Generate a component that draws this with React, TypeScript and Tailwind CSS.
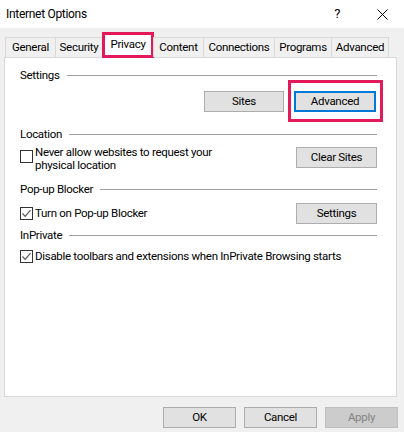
import React from "react";

const font = { fontFamily: 'Roboto, "Noto Sans", sans-serif' };

function Btn({ children, w, disabled, focused }: { children: React.ReactNode; w: string; disabled?: boolean; focused?: boolean }) {
  return (
    <div
      className={
        "h-[21px] flex items-center justify-center text-[11.5px] leading-none whitespace-nowrap " +
        w +
        (disabled
          ? " bg-[#cccccc] border border-[#bfbfbf] text-[#838383]"
          : focused
          ? " bg-[#e1e1e1] border-2 border-[#0078d7] text-[#000]"
          : " bg-[#e1e1e1] border border-[#adadad] text-[#000]")
      }
    >
      {children}
    </div>
  );
}

function Header({ label }: { label: string }) {
  return (
    <div className="flex items-center h-[16px] gap-[7px]">
      <span className="text-[11.5px] leading-[16px] text-black whitespace-nowrap">{label}</span>
      <div className="flex-1 h-px bg-[#a0a0a0]" />
    </div>
  );
}

function Check({ checked }: { checked: boolean }) {
  return (
    <div className="w-[13px] h-[13px] border border-[#333333] bg-white flex items-center justify-center shrink-0">
      {checked && (
        <svg width="11" height="11" viewBox="0 0 11 11">
          <path d="M1.5 5.5 L4.2 8.3 L9.5 2.2" fill="none" stroke="#555555" strokeWidth="1.2" />
        </svg>
      )}
    </div>
  );
}

const tabs = ["General", "Security", "Privacy", "Content", "Connections", "Programs", "Advanced"];
const tabW = ["w-[50px]", "w-[48px]", "w-[50px]", "w-[50px]", "w-[71px]", "w-[57px]", "w-[58px]"];

export default function App() {
  return (
    <div className="w-[404px] h-[432px] bg-[#f0f0f0] flex flex-col overflow-hidden tracking-[-0.3px]" style={font}>
      {/* Title bar */}
      <div className="h-[28px] bg-white flex items-center pl-[6px] shrink-0">
        <span className="text-[12px] text-black">Internet Options</span>
        <span className="ml-auto mr-[37px] text-[13px] text-black">?</span>
        <svg width="11" height="11" viewBox="0 0 11 11" className="mr-[16px]">
          <path d="M0.5 0.5 L10.5 10.5 M10.5 0.5 L0.5 10.5" stroke="#000" strokeWidth="1" />
        </svg>
      </div>

      {/* Tabs */}
      <div className="flex pl-[5px] mt-[9px] h-[20px] items-end relative z-10 shrink-0">
        {tabs.map((t, i) => {
          const sel = t === "Privacy";
          return (
            <div
              key={t}
              className={
                "relative flex items-center justify-center text-[11.5px] text-black whitespace-nowrap " +
                tabW[i] +
                (sel
                  ? " h-[23px] bg-white border-x border-t border-[#d9d9d9] pb-[3px]"
                  : " h-[20px] bg-[#f0f0f0] border-t border-l border-[#d9d9d9]" + (i === tabs.length - 1 || i === 1 ? " border-r" : ""))
              }
            >
              {t}
              {sel && (
                <div className="absolute left-[-2px] right-[-2px] top-[-3px] h-[26px] border-[3px] border-[#e21a59]" />
              )}
            </div>
          );
        })}
      </div>

      {/* Panel */}
      <div className="mx-[4px] w-[393px] h-[340px] shrink-0 bg-white border border-[#d9d9d9] pl-[15px] pr-[19px] pt-[9px] flex flex-col">
        <Header label="Settings" />
        <div className="flex justify-end mt-[8px] gap-[10px] pr-[1px] h-[21px]">
          <Btn w="w-[80px]">Sites</Btn>
          <div className="relative">
            <Btn w="w-[82px]" focused>Advanced</Btn>
            <div className="absolute left-[-6px] right-[-7px] top-[-11px] bottom-[-10px] border-[3px] border-[#e21a59]" />
          </div>
        </div>

        <div className="mt-[14px]">
          <Header label="Location" />
        </div>
        <div className="flex items-start mt-[4px] h-[26px]">
          <div className="flex items-start">
            <div className="mt-[4px]">
              <Check checked={false} />
            </div>
            <div className="ml-[2px] text-[11.5px] text-black whitespace-nowrap">
              <div className="h-[13px] leading-[13px]">Never allow websites to request your</div>
              <div className="h-[13px] leading-[13px]">physical location</div>
            </div>
          </div>
          <div className="ml-auto mt-[1px]">
            <Btn w="w-[81px]">Clear Sites</Btn>
          </div>
        </div>

        <div className="mt-[9px]">
          <Header label="Pop-up Blocker" />
        </div>
        <div className="flex items-center mt-[6px] h-[21px]">
          <Check checked />
          <span className="ml-[2px] text-[11.5px] text-black leading-[13px] whitespace-nowrap">Turn on Pop-up Blocker</span>
          <div className="ml-auto">
            <Btn w="w-[81px]">Settings</Btn>
          </div>
        </div>

        <div className="mt-[3px]">
          <Header label="InPrivate" />
        </div>
        <div className="flex items-center mt-[5px] h-[16px]">
          <Check checked />
          <span className="ml-[2px] text-[11.5px] text-black leading-[13px] whitespace-nowrap">
            Disable toolbars and extensions when InPrivate Browsing starts
          </span>
        </div>
      </div>

      {/* Footer */}
      <div className="flex justify-end gap-[8px] mt-[10px] pr-[6px]">
        <Btn w="w-[73px]">OK</Btn>
        <Btn w="w-[73px]">Cancel</Btn>
        <Btn w="w-[73px]" disabled>Apply</Btn>
      </div>
    </div>
  );
}
